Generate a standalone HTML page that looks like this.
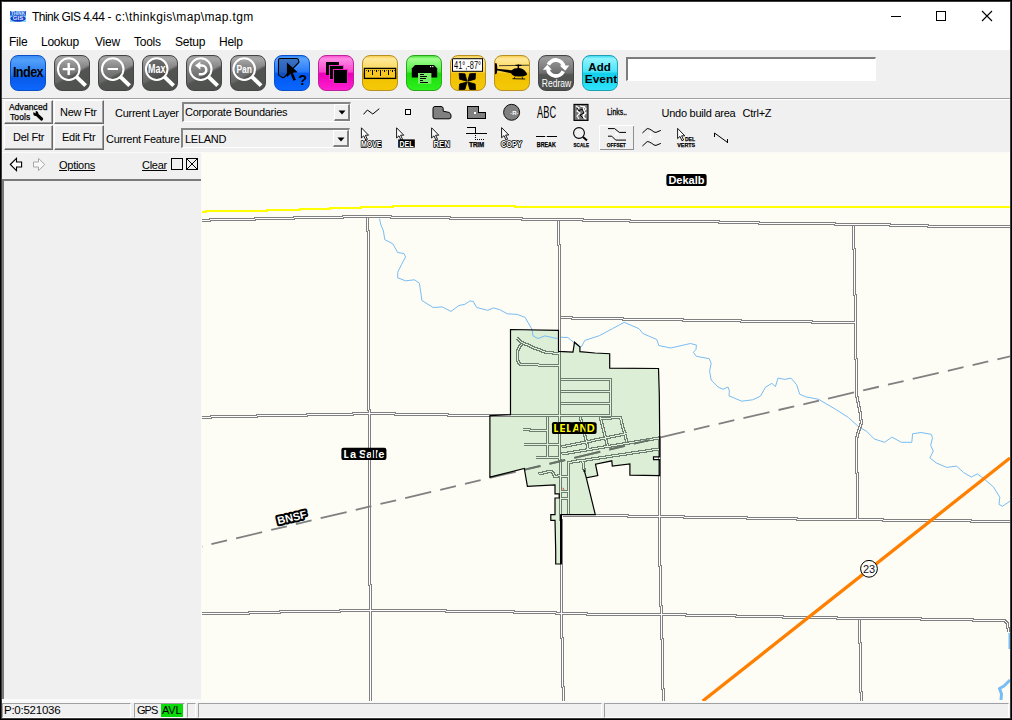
<!DOCTYPE html>
<html>
<head>
<meta charset="utf-8">
<title>Think GIS</title>
<style>
html,body{margin:0;padding:0;}
body{width:1012px;height:720px;overflow:hidden;background:#000;font-family:"Liberation Sans",sans-serif;font-size:12px;color:#000;position:relative;}
div,span,svg{position:absolute;}
.t{white-space:nowrap;line-height:1;}
.m{top:36px;font-size:12px;letter-spacing:-0.25px;}
.s{font-size:11px;letter-spacing:-0.27px;}
.tb{top:55px;width:36px;height:36px;border-radius:8px;box-sizing:border-box;overflow:hidden;}
.tb svg{left:-1px;top:-1px;width:36px;height:36px;}
.gray{background:linear-gradient(152deg,rgba(80,82,80,0) 0%,rgba(80,82,80,0) 51%,rgba(82,84,82,1) 57%,#4e504e 100%),linear-gradient(#9a9a9a 0%,#a8a8a8 8%,#8a8a8a 30%,#727272 55%,#666 80%,#606060 100%);border:1px solid #444644;}
.blue{background:linear-gradient(#2f86ff 0%,#5aa4ff 8%,#2a7af8 46%,#0058ee 52%,#0a66ff 100%);border:1px solid #0a50c8;}
.mag{background:linear-gradient(#ff50d0 0%,#ff8ae4 8%,#f846cc 46%,#ec00b8 52%,#ff20d0 100%);border:1px solid #c0209c;}
.yel{background:linear-gradient(#f8cc50 0%,#ffe99a 8%,#fbd450 46%,#f0c000 52%,#f4c808 100%);border:1px solid #b89020;}
.grn{background:linear-gradient(#50e040 0%,#a0ff90 8%,#50ec40 46%,#18dc08 52%,#30f020 100%);border:1px solid #28a818;}
.cyn{background:linear-gradient(#40dcf0 0%,#90f4ff 8%,#48e4f8 46%,#10d0ec 52%,#30e4fc 100%);border:1px solid #20a0b4;}
.btn{box-sizing:border-box;background:#f0f0f0;border:1px solid;border-color:#fff #696969 #696969 #fff;box-shadow:inset -1px -1px 0 #a0a0a0;}
.combo{box-sizing:border-box;background:#fff;border:1px solid;border-color:#808080 #fff #fff #808080;box-shadow:inset 1px 1px 0 #404040;}
.combo2{box-sizing:border-box;background:#f0f0f0;border-style:solid;border-width:2px 1px 1px 2px;border-color:#858585 #fff #fff #858585;}
.btn2{box-sizing:border-box;background:#f0f0f0;border-style:solid;border-width:1px 2px 2px 1px;border-color:#fff #808080 #808080 #fff;}
.sunk{box-sizing:border-box;border:1px solid;border-color:#a0a0a0 #fff #fff #a0a0a0;}
</style>
</head>
<body>
<div style="left:1px;top:1px;width:1010px;height:718px;background:#3c3c3c;"></div>
<div style="left:2px;top:2px;width:1008px;height:716px;background:#f0f0f0;"></div>
<!-- title bar + menu -->
<div style="left:2px;top:2px;width:1008px;height:48px;background:#fff;"></div>
<svg style="left:10px;top:11px;width:16px;height:11px;" viewBox="0 0 17 12" preserveAspectRatio="none">
  <rect x="0" y="0" width="17" height="12" fill="#7fd4f4"/>
  <rect x="0" y="0" width="17" height="5" fill="#3058d0"/>
  <text x="8.5" y="4.6" font-family="Liberation Sans" font-weight="700" font-size="5.2" fill="#bfe4ff" text-anchor="middle" textLength="15" lengthAdjust="spacingAndGlyphs">THINK</text>
  <ellipse cx="8.5" cy="8.2" rx="8" ry="3.4" fill="#1838c8"/>
  <text x="8.5" y="10.2" font-family="Liberation Sans" font-weight="700" font-size="5.4" fill="#dfeaff" text-anchor="middle" textLength="11" lengthAdjust="spacingAndGlyphs">GIS</text>
</svg>
<span class="t" style="left:32px;top:11px;font-size:12px;letter-spacing:-0.55px;">Think GIS 4.44</span><span class="t" style="left:107.4px;top:11px;font-size:12px;">-</span><span class="t" style="left:115.3px;top:11px;font-size:12px;letter-spacing:0.36px;">c:\thinkgis\map\map.tgm</span>
<svg style="left:880px;top:1px;width:130px;height:30px;" viewBox="880 1 130 30" shape-rendering="crispEdges">
  <path d="M891 16.5h10" stroke="#000" stroke-width="1" fill="none"/>
  <rect x="936.5" y="11.5" width="9" height="9" stroke="#000" stroke-width="1" fill="none"/>
  <path d="M982 11l10 10M992 11l-10 10" stroke="#000" stroke-width="1.1" fill="none" shape-rendering="auto"/>
</svg>
<span class="t m" style="left:9px;">File</span>
<span class="t m" style="left:41px;">Lookup</span>
<span class="t m" style="left:95px;">View</span>
<span class="t m" style="left:134px;">Tools</span>
<span class="t m" style="left:175px;">Setup</span>
<span class="t m" style="left:219px;">Help</span>

<!-- toolbar 1 -->
<div class="tb blue" style="left:10px;background:linear-gradient(#3a8cf6 0%,#52a0fa 12%,#2e80f2 45%,#1c6eee 59%,#0a5ae8 62%,#0c68fc 100%);"><span class="t" style="left:0;top:9px;width:34px;text-align:center;font-weight:700;font-size:14px;letter-spacing:-0.6px;transform:scaleX(0.9);">Index</span></div>
<div class="tb gray" style="left:54px;"><svg viewBox="0 0 36 36"><circle cx="14.7" cy="14.1" r="10.8" fill="none" stroke="#fff" stroke-width="2"/><path d="M22.5 21.9L31.6 30.6" stroke="#fff" stroke-width="4"/><path d="M8.7 14.1h12M14.7 8.1v12" stroke="#fff" stroke-width="2.4"/></svg></div>
<div class="tb gray" style="left:98px;"><svg viewBox="0 0 36 36"><circle cx="14.7" cy="14.1" r="10.8" fill="none" stroke="#fff" stroke-width="2"/><path d="M22.5 21.9L31.6 30.6" stroke="#fff" stroke-width="4"/><path d="M9.6 14h10.4" stroke="#fff" stroke-width="2.2"/></svg></div>
<div class="tb gray" style="left:142px;"><svg viewBox="0 0 36 36"><circle cx="14.7" cy="14.1" r="10.8" fill="#404040" fill-opacity="0.55" stroke="#fff" stroke-width="2"/><path d="M22.5 21.9L31.6 30.6" stroke="#fff" stroke-width="4"/><text x="14.8" y="18" font-family="Liberation Sans" font-weight="700" font-size="12" fill="#fff" text-anchor="middle" textLength="17.4" lengthAdjust="spacingAndGlyphs">Max</text></svg></div>
<div class="tb gray" style="left:186px;"><svg viewBox="0 0 36 36"><circle cx="14.7" cy="14.1" r="10.8" fill="none" stroke="#fff" stroke-width="2"/><path d="M22.5 21.9L31.6 30.6" stroke="#fff" stroke-width="4"/><path d="M13 10.6h3a4.3 4.3 0 0 1 0 8.6h-3.2" fill="none" stroke="#fff" stroke-width="2.5"/><path d="M9 10.6l5.4-4.2v8.4z" fill="#fff"/></svg></div>
<div class="tb gray" style="left:230px;"><svg viewBox="0 0 36 36"><circle cx="14.2" cy="14.1" r="10.8" fill="none" stroke="#fff" stroke-width="2"/><path d="M22 21.9L31.1 30.6" stroke="#fff" stroke-width="4"/><text x="14.2" y="17.8" font-family="Liberation Sans" font-weight="700" font-size="11" fill="#fff" text-anchor="middle" textLength="15.5" lengthAdjust="spacingAndGlyphs">Pan</text></svg></div>
<div class="tb blue" style="left:274px;"><svg viewBox="0 0 36 36"><path d="M6 3.5H22.5Q24.6 3.5 24.8 6V7.5L10.5 22Q9.3 23 8 22.3L5.3 20.6Q4.5 20 4.5 19V5Q4.5 3.5 6 3.5Z" fill="#204890" fill-opacity="0.55" stroke="#000" stroke-width="1.1"/><path d="M12.9 7.4V22.2L16.4 18.7L19.5 25.8L21.9 24.8L18.8 17.7L23.7 17.3Z" fill="#000"/><text x="28.8" y="29.8" font-family="Liberation Sans" font-weight="700" font-size="14.5" fill="#000" text-anchor="middle">?</text></svg></div>
<div class="tb mag" style="left:318px;"><svg viewBox="0 0 36 36" shape-rendering="crispEdges"><rect x="8" y="7" width="13" height="13" fill="#000"/><rect x="11" y="10" width="15" height="15" fill="#f030c8"/><rect x="12" y="11" width="13" height="13" fill="#000"/><rect x="15" y="14" width="15" height="15" fill="#f020c4"/><rect x="16" y="15" width="13" height="13" fill="#000"/></svg></div>
<div class="tb yel" style="left:362px;"><svg viewBox="0 0 36 36" shape-rendering="crispEdges"><rect x="2.4" y="13.4" width="31.3" height="10" fill="#f6c820" stroke="#000" stroke-width="1.3" shape-rendering="auto"/><path d="M6.5 15v2M10.5 15v4.5M14.5 15v2M18.5 15v5.5M22.5 15v2M26.5 15v4.5M30.5 15v2" stroke="#000" stroke-width="1"/><path d="M4.5 15v1M8.5 15v1M12.5 15v1M16.5 15v1M20.5 15v1M24.5 15v1M28.5 15v1M32.5 15v1" stroke="#000" stroke-width="0.6"/></svg></div>
<div class="tb grn" style="left:406px;"><svg viewBox="0 0 36 36"><path d="M9 10H28L31.2 13.6V22.6H5.8V13.6Z" fill="#000"/><rect x="12" y="18" width="13.4" height="10.8" fill="#78ee68"/><path d="M14.3 19.5h3.5M14.3 21.5h6.6M14.3 23.5h5.7M14.3 25.5h2.6M14.3 27.5h7.5" stroke="#000" stroke-width="1" shape-rendering="crispEdges"/><rect x="24" y="11" width="1.2" height="1.2" fill="#fff"/><rect x="26.2" y="11" width="1.2" height="1.2" fill="#fff"/></svg></div>
<div class="tb yel" style="left:450px;"><svg viewBox="0 0 36 36"><rect x="2.5" y="3.7" width="30" height="12.6" fill="#fff" stroke="#000" stroke-width="1"/><text x="17.5" y="13.6" font-family="Liberation Sans" font-size="11" fill="#000" text-anchor="middle" textLength="27" lengthAdjust="spacingAndGlyphs">41°,-87°</text><path d="M17.77 27.02L25.13 29.00L25.55 34.80L19.75 34.38ZM16.93 27.02L14.95 34.38L9.15 34.80L9.57 29.00ZM16.93 26.18L9.57 24.20L9.15 18.40L14.95 18.82ZM17.77 26.18L19.75 18.82L25.55 18.40L25.13 24.20Z" fill="#000" stroke="#000" stroke-width="0.8" stroke-linejoin="miter"/></svg></div>
<div class="tb yel" style="left:494px;"><svg viewBox="0 0 36 36"><path d="M5 10.7L35.6 10.2" stroke="#000" stroke-width="0.7"/><path d="M23.6 9.6h1.5v4h-1.5z" fill="#000"/><path d="M21.5 10.4h6" stroke="#000" stroke-width="1.2"/><path d="M2 13.8L17.5 15.2Q20 13 24.5 13Q29 13.2 31.5 16.5Q33.5 18.6 32.8 20Q30 21.8 24 21.6Q19 21.4 17 18.2L2.5 15.2Z" fill="#000"/><ellipse cx="1.8" cy="13.6" rx="1.5" ry="5.6" fill="#000"/><path d="M18.5 23.7L31.2 24" stroke="#000" stroke-width="0.9"/><path d="M21 21.5l-1 2.3M28 21.5l0.6 2.4" stroke="#000" stroke-width="0.8"/></svg></div>
<div class="tb gray" style="left:538px;background:linear-gradient(#8c8c8c 0%,#9a9a9a 7%,#6e6e6e 50%,#545654 55%,#4e504e 100%);"><svg viewBox="0 0 36 36"><path d="M10.44 9.87A8.0 8.0 0 0 1 25.72 11.89" fill="none" stroke="#fff" stroke-width="3.8"/><path d="M25.16 16.13A8.0 8.0 0 0 1 9.88 14.11" fill="none" stroke="#fff" stroke-width="3.8"/><path d="M21.8 10.4H31.2L27.2 15.8Z" fill="#fff"/><path d="M4.8 14.7H13.8L9.4 9.8Z" fill="#fff"/><text x="18.5" y="32" font-family="Liberation Sans" font-size="10.4" fill="#fff" text-anchor="middle" textLength="29.5" lengthAdjust="spacingAndGlyphs">Redraw</text></svg></div>
<div class="tb cyn" style="left:582px;"><svg viewBox="0 0 36 36"><text x="17.6" y="16.4" font-family="Liberation Sans" font-weight="700" font-size="11.5" fill="#000" text-anchor="middle" textLength="22.5" lengthAdjust="spacingAndGlyphs">Add</text><text x="19" y="27.6" font-family="Liberation Sans" font-weight="700" font-size="11.5" fill="#000" text-anchor="middle" textLength="32.5" lengthAdjust="spacingAndGlyphs">Event</text></svg></div>
<div style="left:626px;top:57px;width:250px;height:24px;box-sizing:border-box;background:#fff;border-style:solid;border-width:2px 1px 1px 2px;border-color:#7c7c7c #fff #fff #7c7c7c;"></div>
<!-- separator -->
<div style="left:2px;top:98px;width:1008px;height:1px;background:#a0a0a0;"></div>
<div style="left:2px;top:99px;width:1008px;height:1px;background:#fff;"></div>
<!-- toolbar 2 -->
<div class="btn" style="left:4px;top:100px;width:49px;height:24px;"></div>
<span class="t" style="left:9px;top:103px;font-size:8.5px;letter-spacing:0.1px;-webkit-text-stroke:0.25px #000;">Advanced</span>
<span class="t" style="left:10px;top:113px;font-size:8.5px;letter-spacing:0.1px;-webkit-text-stroke:0.25px #000;">Tools</span>
<svg style="left:32px;top:110px;width:13px;height:12px;" viewBox="32 110 13 12"><path d="M36.6 114.4L41.6 119" stroke="#000" stroke-width="3.1" stroke-linecap="round"/><circle cx="35.8" cy="113.6" r="2.5" fill="#000"/><path d="M32.6 111.6L35.6 113.6L35.8 110.4Z" fill="#f0f0f0"/></svg>
<div class="btn" style="left:54px;top:100px;width:50px;height:24px;"></div>
<span class="t s" style="left:60px;top:107px;">New Ftr</span>
<div class="btn" style="left:4px;top:125px;width:49px;height:25px;"></div>
<span class="t s" style="left:13px;top:132px;">Del Ftr</span>
<div class="btn" style="left:54px;top:125px;width:50px;height:25px;"></div>
<span class="t s" style="left:62px;top:132px;">Edit Ftr</span>
<span class="t s" style="left:115px;top:108px;">Current Layer</span>
<span class="t s" style="left:106px;top:134px;">Current Feature</span>
<div class="combo2" style="left:182px;top:102px;width:169px;height:20px;"></div>
<span class="t s" style="left:185px;top:107px;">Corporate Boundaries</span>
<div class="btn2" style="left:334px;top:104px;width:16px;height:17px;"></div>
<svg style="left:338px;top:110px;width:8px;height:5px;" viewBox="0 0 8 5"><path d="M0.5 0.5h7L4 4.5Z" fill="#000"/></svg>
<div class="combo2" style="left:181px;top:128px;width:169px;height:20px;"></div>
<span class="t s" style="left:185px;top:134px;">LELAND</span>
<div class="btn2" style="left:333px;top:130px;width:16px;height:17px;"></div>
<svg style="left:337px;top:137px;width:8px;height:5px;" viewBox="0 0 8 5"><path d="M0.5 0.5h7L4 4.5Z" fill="#000"/></svg>

<svg style="left:355px;top:100px;width:440px;height:52px;" viewBox="355 100 440 52" font-family="Liberation Sans">
  <!-- row 1 -->
  <path d="M363.3 114.6L367.4 110L372.8 114L379.3 108.7" fill="none" stroke="#000" stroke-width="1"/>
  <rect x="362" y="114.5" width="1.5" height="1.5" fill="#fff"/>
  <rect x="405.5" y="109.5" width="5" height="5" fill="#fff" stroke="#000" stroke-width="1" shape-rendering="crispEdges"/>
  <path d="M433 108.5Q433 106.5 435 106.5H441Q443 106.5 443.2 108.5V111.2L449 112.4Q451 113.5 451 115.5V117Q451 118.8 449 118.8H435Q433 118.8 433 117Z" fill="#808080" stroke="#000" stroke-width="1"/>
  <path d="M467.5 106.5H478.5V112.5H485.5V118.5H467.5Z" fill="#808080" stroke="#000" stroke-width="1" shape-rendering="crispEdges"/>
  <rect x="474" y="112" width="2" height="2" fill="#fff"/>
  <circle cx="511.6" cy="112.3" r="8" fill="#808080" stroke="#000" stroke-width="0.9"/>
  <text x="514.4" y="115" font-size="6" font-weight="700" fill="#fff" text-anchor="middle">·R·</text>
  <text x="546.6" y="117.7" font-size="16.6" fill="#000" text-anchor="middle" textLength="19" lengthAdjust="spacingAndGlyphs">ABC</text>
  <rect x="574" y="104.4" width="14" height="16" fill="#787878" stroke="#000" stroke-width="1.1"/>
  <path d="M576 106l3 2l-2 3l3 2l-3 3l2 3M580 106l4 1l-1 4l3 2l-3 2l2 4M584 106l2 3l-2 2l1 3l-2 3l3 2" stroke="#fff" stroke-width="1.1" fill="none"/>
  <path d="M577 108l2 3l3-2l2 4l-4 2l3 3" stroke="#000" stroke-width="1" fill="none"/>
  <text x="607" y="115.2" font-size="8.8" font-weight="400" fill="#000" stroke="#000" stroke-width="0.3" textLength="20" lengthAdjust="spacingAndGlyphs">Links..</text>
  <text x="661.5" y="116.8" font-size="11" fill="#000" letter-spacing="-0.25">Undo build area</text><text x="742.6" y="116.8" font-size="11" fill="#000" letter-spacing="-0.25">Ctrl+Z</text>
  <!-- row 2 -->
  <path transform="translate(361.4 127.8)" d="M0 0V10.2L2.4 8L4.4 12.4L6 11.6L4 7.4H7.2Z" fill="#fff" stroke="#000" stroke-width="0.9" stroke-linejoin="miter"/>
  <text x="361" y="147" font-size="8.6" font-weight="700" fill="#fff" stroke="#000" stroke-width="1.7" paint-order="stroke" stroke-linejoin="round" textLength="20.5" lengthAdjust="spacingAndGlyphs">MOVE</text>
  <path transform="translate(396.6 127.8)" d="M0 0V10.2L2.4 8L4.4 12.4L6 11.6L4 7.4H7.2Z" fill="#fff" stroke="#000" stroke-width="0.9" stroke-linejoin="miter"/>
  <rect x="398.2" y="139.4" width="16.6" height="8.2" fill="#000"/>
  <text x="399.6" y="146.6" font-size="8.6" font-weight="700" fill="#fff" textLength="13.8" lengthAdjust="spacingAndGlyphs">DEL</text>
  <path transform="translate(431.6 127.8)" d="M0 0V10.2L2.4 8L4.4 12.4L6 11.6L4 7.4H7.2Z" fill="#fff" stroke="#000" stroke-width="0.9" stroke-linejoin="miter"/>
  <text x="433.4" y="147" font-size="8.6" font-weight="700" fill="#fff" stroke="#000" stroke-width="1.7" paint-order="stroke" stroke-linejoin="round" textLength="16.4" lengthAdjust="spacingAndGlyphs">REN</text>
  <g shape-rendering="crispEdges" stroke="#000" stroke-width="1" fill="none">
    <path d="M467 127.5H475.5V133"/>
    <path d="M466 133.5H487"/>
    <path d="M475.5 134.5V139.5H484.5" stroke-dasharray="1 1"/>
  </g>
  <text x="469.2" y="147.4" font-size="6.6" font-weight="700" fill="#000" stroke="#000" stroke-width="0.25" textLength="15" lengthAdjust="spacingAndGlyphs">TRIM</text>
  <path transform="translate(501.6 127.6)" d="M0 0V10.2L2.4 8L4.4 12.4L6 11.6L4 7.4H7.2Z" fill="#fff" stroke="#000" stroke-width="0.9" stroke-linejoin="miter"/>
  <text x="501" y="147" font-size="8.6" font-weight="700" fill="#fff" stroke="#000" stroke-width="1.7" paint-order="stroke" stroke-linejoin="round" textLength="21" lengthAdjust="spacingAndGlyphs">COPY</text>
  <path d="M536 136.5H556.6" stroke="#000" stroke-width="1" shape-rendering="crispEdges"/>
  <path d="M544 134.4L548 138.4M548 134.4L544 138.4" stroke="#fff" stroke-width="1"/>
  <text x="536.8" y="147.4" font-size="6.6" font-weight="700" fill="#000" stroke="#000" stroke-width="0.25" textLength="19" lengthAdjust="spacingAndGlyphs">BREAK</text>
  <circle cx="579" cy="133" r="5.4" fill="none" stroke="#000" stroke-width="1.1"/>
  <path d="M583 137L587 140.6" stroke="#000" stroke-width="2"/>
  <text x="573.6" y="146.6" font-size="6.2" font-weight="700" fill="#000" stroke="#000" stroke-width="0.25" textLength="15.4" lengthAdjust="spacingAndGlyphs">SCALE</text>
  <!-- OFFSET button -->
  <path d="M599.5 149.5V125.5H633.5" stroke="#fff" stroke-width="1" fill="none" shape-rendering="crispEdges"/>
  <path d="M599.5 149.5H633.5V125.5" stroke="#909090" stroke-width="1" fill="none" shape-rendering="crispEdges"/>
  <path d="M608 128.6H614.6L619.3 132.4H626" stroke="#000" stroke-width="1" fill="none"/>
  <path d="M608 136.2H611.8L615.7 140.1H626" stroke="#000" stroke-width="1" fill="none"/>
  <path d="M613.5 136.5L617.5 133.5M615 133h2.8v2.8" stroke="#fff" stroke-width="1" fill="none"/>
  <text x="606.8" y="146.6" font-size="6.2" font-weight="700" fill="#000" stroke="#000" stroke-width="0.25" textLength="19" lengthAdjust="spacingAndGlyphs">OFFSET</text>
  <path d="M642.4 133L647.2 128.6Q649 128.4 651.9 130.4Q654 132.6 656 132.4L660.8 130.4" stroke="#000" stroke-width="1" fill="none"/>
  <path d="M642.4 146L647.2 141.6Q649 141.4 651.9 143.4Q654 145.6 656 145.4L660.8 143.4" stroke="#000" stroke-width="1" fill="none"/>
  <path d="M650.5 132V138M648.5 136l2 2.4l2-2.4" stroke="#fff" stroke-width="1" fill="none"/>
  <path transform="translate(677.6 128.4)" d="M0 0V10.2L2.4 8L4.4 12.4L6 11.6L4 7.4H7.2Z" fill="#fff" stroke="#000" stroke-width="0.9" stroke-linejoin="miter"/>
  <text x="685" y="140.7" font-size="6" font-weight="700" fill="#000" stroke="#000" stroke-width="0.25" textLength="10" lengthAdjust="spacingAndGlyphs">DEL</text>
  <text x="677.2" y="146.7" font-size="6" font-weight="700" fill="#000" stroke="#000" stroke-width="0.25" textLength="18" lengthAdjust="spacingAndGlyphs">VERTS</text>
  <path d="M714.5 133L727.6 142.5" stroke="#000" stroke-width="1"/>
  <path d="M714.5 133V136.5M727.5 139V143" stroke="#000" stroke-width="1" shape-rendering="crispEdges"/>
</svg>
<!-- left panel -->
<svg style="left:2px;top:153px;width:199px;height:28px;" viewBox="2 153 199 28">
  <path d="M10.3 164.5L16.5 158.4V162H21.6V167H16.5V170.6Z" fill="#fff" stroke="#000" stroke-width="1.1"/>
  <path d="M44.8 164.5L38.5 158.4V162H33.5V167H38.5V170.6Z" fill="#f8f8f8" stroke="#a8a8a8" stroke-width="1"/>
  <rect x="171.5" y="158.5" width="11" height="11" fill="#f0f0f0" stroke="#000" stroke-width="1" shape-rendering="crispEdges"/>
  <rect x="186.5" y="158.5" width="11" height="11" fill="#f0f0f0" stroke="#000" stroke-width="1" shape-rendering="crispEdges"/>
  <path d="M187 159L197 169M197 159L187 169" stroke="#000" stroke-width="1"/>
</svg>
<span class="t s" style="left:59px;top:160px;text-decoration:underline;">Options</span>
<span class="t s" style="left:142px;top:160px;text-decoration:underline;">Clear</span>
<div style="left:2px;top:179px;width:199px;height:520px;box-sizing:border-box;border-top:2px solid #7a7a7a;border-left:2px solid #7a7a7a;background:#f0f0f0;"></div>
<div style="left:2px;top:699px;width:199px;height:2px;background:#fbfbfb;"></div>
<div style="left:2px;top:152px;width:199px;height:1px;background:#fbfbfb;"></div>
<!-- map -->
<div style="left:201px;top:152px;width:809px;height:549px;background:#fafaf8;"></div>
<div style="left:202px;top:153px;width:808px;height:548px;background:#fdfdf5;"></div>
<svg style="left:202px;top:153px;width:808px;height:548px;" viewBox="202 153 808 548" font-family="Liberation Sans">
  <defs>
    <clipPath id="tc"><path d="M510.5 329.5L558.5 330.3V351.4L573 352.2L574.5 342.2L579.9 346.8V351.6L595 353L609.7 353.7V368.2L658.5 368.5L659.3 394.2L659.7 437V456.8H653.5V459.6H659.7V475.6L629.9 475.2V463.9L612.3 466L611.8 460.8L595.5 464.2L597.8 475.6L586.3 477.9L584 469.5L586.3 477.9L595.3 514.7H560.8L561.3 564H555.7V550.8L555 520.3H550.8V514.7H555V498H559.2V493.9H555V484.9L527.4 486.3L524.3 468.5L489.9 477.2V415.6L510.5 414.7Z"/></clipPath>
  </defs>
  <path d="M510.5 329.5L558.5 330.3V351.4L573 352.2L574.5 342.2L579.9 346.8V351.6L595 353L609.7 353.7V368.2L658.5 368.5L659.3 394.2L659.7 437V456.8H653.5V459.6H659.7V475.6L629.9 475.2V463.9L612.3 466L611.8 460.8L595.5 464.2L597.8 475.6L586.3 477.9L584 469.5L586.3 477.9L595.3 514.7H560.8L561.3 564H555.7V550.8L555 520.3H550.8V514.7H555V498H559.2V493.9H555V484.9L527.4 486.3L524.3 468.5L489.9 477.2V415.6L510.5 414.7Z" fill="#dceed5" stroke="none"/>
  <path d="M379.5 218.6L380.9 224.9L383.4 230.8L384.8 239.7L392.7 243.7L397.7 252.5L404 253.5L405.6 256.9L401.6 264.4L397.7 272.3L397.7 277.8L405.6 280.8L414.5 279.8L419.4 283.2L421 294L421.8 300.4L433.2 307.5L442.1 306.9L451 311.4L458.9 305.5L464.9 304.3L469.8 301L473.2 301.4L476.7 307.5L487.6 310.3L493.5 307.9L499.4 309.5L507.4 313.8L517.2 314.4L525.1 317.4L532.1 329.6L533 335.9L538 338.5L544.9 335.9L556.8 338.5L560 337.2L567.9 337.5L573.8 342.5L579.8 347.4L581.7 346.4L584.7 340.5L599.5 335.6L612.4 328.7L624.2 322.3L639 328.7L643 333.6L656.8 339.5L658.8 345.5L670.7 348L690.4 343.5L696.4 345L696 349.4L693.4 352.4L696.4 356.3L709.2 358.7L711.2 363.2L709.6 371.1L711.2 380L718.1 387L723 389.3L728 387L729.4 390.9L729 395.8L734.9 398.4L741.8 401.2L752.7 399.8L760.4 396.2L765.5 387.2L772 383.3L775.4 386.7L778 378.1L784.9 379.4L790.9 378.1L796.6 384.6L799.7 394.2L805.7 396.8L818.6 399.3L835.4 409.2L848.4 417.5L858.7 426.8L866.5 431.2L874.3 439L884.6 442.3L891.9 437.1L901.4 442.3L911.8 442.3L912.6 433.8L920.9 432.5L931.2 434.3L932.5 437.7L930.7 445.4L933.3 451.1L929.9 457.9L936.4 463L946.7 467.4L956.6 466.1L963.6 472.6L971.3 477L977.3 473.9L984.3 479.1L993.3 486.8L999.8 497.2L999 504.4L1002.4 506.3L1010 501.1" fill="none" stroke="#78bcf4" stroke-width="1"/>
  <path d="M1009.5 633V649" stroke="#78bcf4" stroke-width="2" fill="none"/>
  <path d="M1010 680L1004 686L999.5 688.5L1001.5 694L1001 700" stroke="#78bcf4" stroke-width="3" fill="none" stroke-linejoin="round"/>
  <path d="M201 212H206V211H267V210H300V209H330V208H361V207H393V206H515V207H1010" stroke="#ffff00" stroke-width="2" fill="none" shape-rendering="crispEdges"/>
  <g shape-rendering="crispEdges" fill="none" stroke-linejoin="miter">
    <path d="M201.5 220.5H209.5L210.5 219.5H254.5L255.5 218.5H293.5L294.5 217.5H342.5L343.5 216.5H390.5L391.5 217.5H449.5L450.5 218.5H521.5L522.5 219.5H582.5L583.5 220.5H629.5L630.5 221.5H718.5L719.5 222.5H758.5L759.5 223.5H834.5L835.5 224.5H889.5L890.5 225.5H927.5L928.5 226.5H1011.5M367.5 217.5V230.5L368.5 231.5V409.5L369.5 410.5V584.5L370.5 585.5V702.5M558.5 220.5V244.5L559.5 245.5V459.5L560.5 460.5V519.5L561.5 520.5V637.5L562.5 638.5V686.5L563.5 687.5V702.5M853.5 225.5V248.5L854.5 249.5V294.5L855.5 295.5V358.5L856.5 359.5V396.5L857.5 397.5V401.5L858.5 402.5V406.5L859.5 407.5V411.5L860.5 412.5V419.5L861.5 420.5V423.5L860.5 424.5V426.5L859.5 427.5V429.5L858.5 430.5V432.5L857.5 433.5V436.5L856.5 437.5V472.5L857.5 473.5V518.5M859.5 619.5V642.5L860.5 643.5V691.5L861.5 692.5V702.5M659.5 435.5V565.5L660.5 566.5V605.5L661.5 606.5V638.5L662.5 639.5V688.5L663.5 689.5V702.5M560.5 317.5H571.5L572.5 318.5H622.5L623.5 319.5H682.5L683.5 320.5H740.5L741.5 321.5H811.5L812.5 322.5H855.5M201.5 417.5H210.5L211.5 416.5H256.5L257.5 415.5H306.5L307.5 414.5H352.5L353.5 413.5H394.5L395.5 414.5H447.5L448.5 415.5H510.5M562.5 515.5H627.5L628.5 516.5H683.5L684.5 517.5H746.5L747.5 518.5H796.5L797.5 519.5H882.5L883.5 520.5H970.5L971.5 521.5H1011.5M201.5 613.5H248.5L249.5 612.5H279.5L280.5 611.5H339.5L340.5 610.5H445.5L446.5 611.5H513.5L514.5 612.5H555.5L556.5 613.5H586.5L587.5 614.5H685.5L686.5 615.5H735.5L736.5 616.5H782.5L783.5 617.5H836.5L837.5 618.5H920.5L921.5 619.5H972.5L973.5 620.5H1004.5L1005.5 621.5L1007.5 623.5V627.5L1008.5 628.5V631.5" stroke="#808080" stroke-width="3"/>
    <path d="M201.5 220.5H209.5L210.5 219.5H254.5L255.5 218.5H293.5L294.5 217.5H342.5L343.5 216.5H390.5L391.5 217.5H449.5L450.5 218.5H521.5L522.5 219.5H582.5L583.5 220.5H629.5L630.5 221.5H718.5L719.5 222.5H758.5L759.5 223.5H834.5L835.5 224.5H889.5L890.5 225.5H927.5L928.5 226.5H1011.5M367.5 217.5V230.5L368.5 231.5V409.5L369.5 410.5V584.5L370.5 585.5V702.5M558.5 220.5V244.5L559.5 245.5V459.5L560.5 460.5V519.5L561.5 520.5V637.5L562.5 638.5V686.5L563.5 687.5V702.5M853.5 225.5V248.5L854.5 249.5V294.5L855.5 295.5V358.5L856.5 359.5V396.5L857.5 397.5V401.5L858.5 402.5V406.5L859.5 407.5V411.5L860.5 412.5V419.5L861.5 420.5V423.5L860.5 424.5V426.5L859.5 427.5V429.5L858.5 430.5V432.5L857.5 433.5V436.5L856.5 437.5V472.5L857.5 473.5V518.5M859.5 619.5V642.5L860.5 643.5V691.5L861.5 692.5V702.5M659.5 435.5V565.5L660.5 566.5V605.5L661.5 606.5V638.5L662.5 639.5V688.5L663.5 689.5V702.5M560.5 317.5H571.5L572.5 318.5H622.5L623.5 319.5H682.5L683.5 320.5H740.5L741.5 321.5H811.5L812.5 322.5H855.5M201.5 417.5H210.5L211.5 416.5H256.5L257.5 415.5H306.5L307.5 414.5H352.5L353.5 413.5H394.5L395.5 414.5H447.5L448.5 415.5H510.5M562.5 515.5H627.5L628.5 516.5H683.5L684.5 517.5H746.5L747.5 518.5H796.5L797.5 519.5H882.5L883.5 520.5H970.5L971.5 521.5H1011.5M201.5 613.5H248.5L249.5 612.5H279.5L280.5 611.5H339.5L340.5 610.5H445.5L446.5 611.5H513.5L514.5 612.5H555.5L556.5 613.5H586.5L587.5 614.5H685.5L686.5 615.5H735.5L736.5 616.5H782.5L783.5 617.5H836.5L837.5 618.5H920.5L921.5 619.5H972.5L973.5 620.5H1004.5L1005.5 621.5L1007.5 623.5V627.5L1008.5 628.5V631.5" stroke="#ffffff" stroke-width="1"/>
  </g>
  <path d="M151.6 558.45L660.7 437.3L1012 355.9" stroke="#808080" stroke-width="1.8" stroke-dasharray="26.7 9.33 16.1 9.33 16.1 9.33" fill="none"/>
  <path d="M702.7 701L1010 458" stroke="#ff7f00" stroke-width="3.3" fill="none"/>
  <g clip-path="url(#tc)">
    <g shape-rendering="crispEdges" fill="none">
      <path d="M559.5 330.5V459.5L560.5 460.5V515.5M510.5 415.5H560.5M547.5 416.5V456.5M522.5 429.5H529.5L530.5 430.5H547.5M523.5 444.5H558.5L559.5 445.5M535.5 457.5H559.5M538.5 474.5L539.5 473.5H542.5L543.5 472.5H546.5L547.5 471.5H551.5L552.5 472.5L553.5 473.5V474.5L554.5 475.5V476.5H557.5L558.5 475.5H559.5M516.5 338.5H517.5L518.5 339.5L519.5 340.5L520.5 341.5L521.5 342.5H522.5L523.5 343.5H524.5L525.5 344.5H527.5L528.5 345.5H529.5L530.5 346.5H531.5L532.5 347.5H533.5L534.5 348.5H536.5L537.5 349.5H539.5L540.5 350.5H541.5L542.5 351.5H544.5L545.5 352.5H552.5L553.5 353.5H559.5M521.5 343.5V344.5L520.5 345.5L519.5 346.5V347.5L518.5 348.5V349.5L517.5 350.5V360.5L518.5 361.5V362.5L519.5 363.5L520.5 364.5H537.5L539.5 365.5H559.5M560.5 379.5H610.5V415.5M560.5 391.5H610.5M560.5 403.5H610.5M560.5 415.5H610.5M580.5 416.5V419.5L581.5 420.5V423.5L582.5 424.5V427.5L583.5 428.5V431.5L584.5 432.5V435.5L585.5 436.5V439.5L586.5 440.5V443.5L587.5 444.5V447.5L588.5 449.5M600.5 416.5V419.5L601.5 420.5V423.5L602.5 424.5V427.5L603.5 428.5V431.5L604.5 432.5V435.5L605.5 436.5V439.5L606.5 440.5V443.5L607.5 444.5V445.5M600.5 419.5L601.5 418.5H610.5L611.5 417.5H620.5V418.5L621.5 420.5V423.5L622.5 424.5V427.5L623.5 428.5V430.5L624.5 431.5V434.5L625.5 435.5V438.5L626.5 439.5V441.5L627.5 442.5M561.5 447.5L562.5 446.5H565.5L566.5 445.5H570.5L571.5 444.5H575.5L576.5 443.5H580.5L581.5 442.5H585.5L586.5 441.5H590.5L591.5 440.5H594.5L595.5 439.5H599.5L600.5 438.5H604.5L605.5 437.5H609.5L610.5 436.5H614.5L615.5 435.5H619.5L620.5 434.5H624.5L625.5 433.5H626.5M561.5 454.5L562.5 453.5H567.5L568.5 452.5H573.5L574.5 451.5H579.5L580.5 450.5H585.5L586.5 449.5H591.5L592.5 448.5H597.5L598.5 447.5H603.5L604.5 446.5H610.5L611.5 445.5H616.5L617.5 444.5H622.5L623.5 443.5H628.5L629.5 442.5H634.5L635.5 441.5H640.5L641.5 440.5H646.5L647.5 439.5H652.5L653.5 438.5H659.5M568.5 462.5H571.5L572.5 461.5H578.5L579.5 460.5H585.5L586.5 459.5H591.5L592.5 458.5H598.5L599.5 457.5H605.5L606.5 456.5H611.5L612.5 455.5H618.5L619.5 454.5H625.5L626.5 453.5H631.5L632.5 452.5H638.5L639.5 451.5H645.5L646.5 450.5H651.5L652.5 449.5H658.5L659.5 448.5M568.5 514.5V462.5H571.5L572.5 461.5H576.5L577.5 460.5H582.5V461.5L583.5 463.5V468.5L584.5 469.5V471.5M560.5 476.5H568.5M560.5 491.5H568.5M560.5 498.5H568.5" stroke="#6e7e6e" stroke-width="3"/>
      <path d="M559.5 330.5V459.5L560.5 460.5V515.5M510.5 415.5H560.5M547.5 416.5V456.5M522.5 429.5H529.5L530.5 430.5H547.5M523.5 444.5H558.5L559.5 445.5M535.5 457.5H559.5M538.5 474.5L539.5 473.5H542.5L543.5 472.5H546.5L547.5 471.5H551.5L552.5 472.5L553.5 473.5V474.5L554.5 475.5V476.5H557.5L558.5 475.5H559.5M516.5 338.5H517.5L518.5 339.5L519.5 340.5L520.5 341.5L521.5 342.5H522.5L523.5 343.5H524.5L525.5 344.5H527.5L528.5 345.5H529.5L530.5 346.5H531.5L532.5 347.5H533.5L534.5 348.5H536.5L537.5 349.5H539.5L540.5 350.5H541.5L542.5 351.5H544.5L545.5 352.5H552.5L553.5 353.5H559.5M521.5 343.5V344.5L520.5 345.5L519.5 346.5V347.5L518.5 348.5V349.5L517.5 350.5V360.5L518.5 361.5V362.5L519.5 363.5L520.5 364.5H537.5L539.5 365.5H559.5M560.5 379.5H610.5V415.5M560.5 391.5H610.5M560.5 403.5H610.5M560.5 415.5H610.5M580.5 416.5V419.5L581.5 420.5V423.5L582.5 424.5V427.5L583.5 428.5V431.5L584.5 432.5V435.5L585.5 436.5V439.5L586.5 440.5V443.5L587.5 444.5V447.5L588.5 449.5M600.5 416.5V419.5L601.5 420.5V423.5L602.5 424.5V427.5L603.5 428.5V431.5L604.5 432.5V435.5L605.5 436.5V439.5L606.5 440.5V443.5L607.5 444.5V445.5M600.5 419.5L601.5 418.5H610.5L611.5 417.5H620.5V418.5L621.5 420.5V423.5L622.5 424.5V427.5L623.5 428.5V430.5L624.5 431.5V434.5L625.5 435.5V438.5L626.5 439.5V441.5L627.5 442.5M561.5 447.5L562.5 446.5H565.5L566.5 445.5H570.5L571.5 444.5H575.5L576.5 443.5H580.5L581.5 442.5H585.5L586.5 441.5H590.5L591.5 440.5H594.5L595.5 439.5H599.5L600.5 438.5H604.5L605.5 437.5H609.5L610.5 436.5H614.5L615.5 435.5H619.5L620.5 434.5H624.5L625.5 433.5H626.5M561.5 454.5L562.5 453.5H567.5L568.5 452.5H573.5L574.5 451.5H579.5L580.5 450.5H585.5L586.5 449.5H591.5L592.5 448.5H597.5L598.5 447.5H603.5L604.5 446.5H610.5L611.5 445.5H616.5L617.5 444.5H622.5L623.5 443.5H628.5L629.5 442.5H634.5L635.5 441.5H640.5L641.5 440.5H646.5L647.5 439.5H652.5L653.5 438.5H659.5M568.5 462.5H571.5L572.5 461.5H578.5L579.5 460.5H585.5L586.5 459.5H591.5L592.5 458.5H598.5L599.5 457.5H605.5L606.5 456.5H611.5L612.5 455.5H618.5L619.5 454.5H625.5L626.5 453.5H631.5L632.5 452.5H638.5L639.5 451.5H645.5L646.5 450.5H651.5L652.5 449.5H658.5L659.5 448.5M568.5 514.5V462.5H571.5L572.5 461.5H576.5L577.5 460.5H582.5V461.5L583.5 463.5V468.5L584.5 469.5V471.5M560.5 476.5H568.5M560.5 491.5H568.5M560.5 498.5H568.5" stroke="#e0f3de" stroke-width="1"/>
    </g>
    <path d="M151.6 558.45L660.7 437.3L1012 355.9" stroke="#667266" stroke-width="2" stroke-dasharray="26.7 9.33 16.1 9.33 16.1 9.33" fill="none"/>
  </g>
  <path d="M510.5 329.5L558.5 330.3V351.4L573 352.2L574.5 342.2L579.9 346.8V351.6L595 353L609.7 353.7V368.2L658.5 368.5L659.3 394.2L659.7 437V456.8H653.5V459.6H659.7V475.6L629.9 475.2V463.9L612.3 466L611.8 460.8L595.5 464.2L597.8 475.6L586.3 477.9L584 469.5L586.3 477.9L595.3 514.7H560.8L561.3 564H555.7V550.8L555 520.3H550.8V514.7H555V498H559.2V493.9H555V484.9L527.4 486.3L524.3 468.5L489.9 477.2V415.6L510.5 414.7Z" fill="none" stroke="#000" stroke-width="1.2"/>
  <path d="M561 515V564" stroke="#000" stroke-width="2" fill="none"/>
  <path d="M562.6 487.2L564.6 489.6H562.8Z" fill="#e02010"/>
  <circle cx="869" cy="568.8" r="8.4" fill="#fdfdf5" stroke="#000" stroke-width="1"/>
  <text x="869" y="572.8" font-size="11" fill="#101030" text-anchor="middle">23</text>
  <g fill="#000"><rect x="666.4" y="174" width="40.2" height="12" rx="2"/><rect x="341.4" y="447.8" width="45" height="12.2" rx="2"/><rect x="552" y="422.2" width="44.6" height="11.8" rx="2"/></g>
  <g font-weight="700" font-size="11" stroke-linejoin="round" stroke="#000" stroke-width="4" paint-order="stroke">
    <text x="668.4" y="184.2" fill="#fff">Dekalb</text>
    <text x="343.4" y="458" fill="#fff" textLength="41" lengthAdjust="spacing">La Salle</text>
    <text x="553.6" y="431.6" fill="#ffff00" textLength="41" lengthAdjust="spacing">LELAND</text>
    <text x="0" y="0" fill="#fff" transform="translate(278.2 524.6) rotate(-13.3)">BNSF</text>
  </g>
</svg>
<!-- status bar -->
<div style="left:2px;top:701px;width:1008px;height:17px;background:#f0f0f0;"></div>
<div style="left:2px;top:701px;width:1008px;height:2px;background:#f9f9f9;"></div>
<div class="sunk" style="left:2px;top:703px;width:129px;height:15px;"></div>
<span class="t" style="left:4px;top:705px;font-size:11.5px;letter-spacing:-0.25px;">P:0:521036</span>
<div class="sunk" style="left:134px;top:703px;width:51px;height:15px;"></div>
<span class="t" style="left:137px;top:705px;font-size:11px;letter-spacing:-1px;">GPS</span>
<div style="left:161px;top:704px;width:22px;height:13px;background:#08dc08;"></div>
<span class="t" style="left:162px;top:705px;font-size:11px;letter-spacing:-0.2px;">AVL</span>
<div class="sunk" style="left:187px;top:703px;width:9px;height:15px;"></div>
<div class="sunk" style="left:198px;top:703px;width:404px;height:15px;"></div>
<div class="sunk" style="left:604px;top:703px;width:405px;height:15px;"></div>
</body>
</html>
